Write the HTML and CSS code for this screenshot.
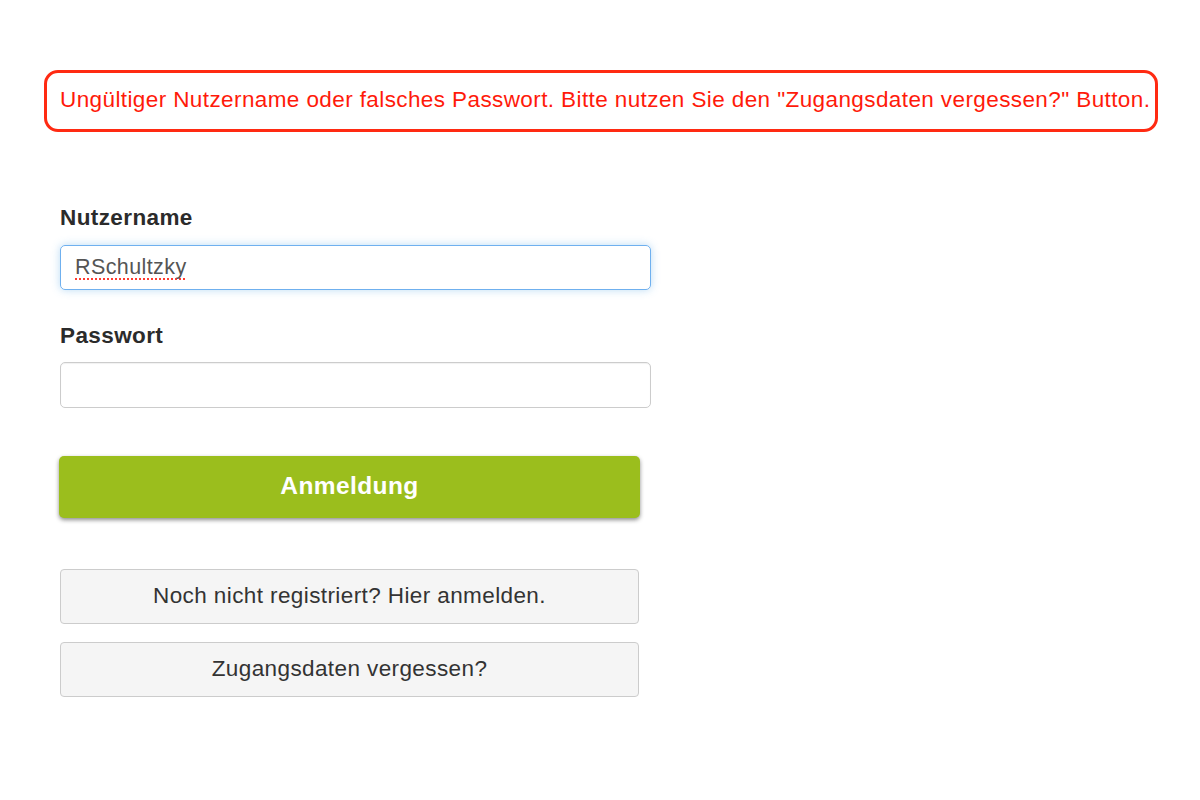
FILE: index.html
```html
<!DOCTYPE html>
<html lang="de">
<head>
<meta charset="utf-8">
<title>Anmeldung</title>
<link rel="stylesheet" href="styles.css">
</head>
<body>
<div class="page">
  <div class="alert">Ungültiger Nutzername oder falsches Passwort. Bitte nutzen Sie den "Zugangsdaten vergessen?" Button.</div>
  <form class="login">
    <label class="label" for="user">Nutzername</label>
    <div class="input focused" id="user"><span class="typed">RSchultzky</span></div>
    <label class="label pw" for="pw">Passwort</label>
    <div class="input" id="pw"></div>
    <button type="button" class="btn-primary">Anmeldung</button>
    <button type="button" class="btn-default first">Noch nicht registriert? Hier anmelden.</button>
    <button type="button" class="btn-default">Zugangsdaten vergessen?</button>
  </form>
</div>
</body>
</html>
```
FILE: styles.css
```css
* { box-sizing: border-box; }
html, body { margin: 0; padding: 0; background: #fff; }
body { font-family: "Liberation Sans", Arial, Helvetica, sans-serif; color: #333; letter-spacing: 0.4px; }
.page { padding: 70px 42px 0 44px; }
.alert {
  height: 62px;
  border: 3px solid #ff2a12;
  border-radius: 14px;
  display: flex;
  align-items: center;
  padding: 0 0 2px 13px;
  color: #ff1a0a;
  font-size: 22.5px;
  white-space: nowrap;
}
.login { display: flex; flex-direction: column; align-items: flex-start; margin: 73px 0 0 16px; width: 591px; }
.label { font-size: 22.5px; font-weight: bold; line-height: 26px; color: #2b2b2b; margin-bottom: 14px; }
.label.pw { margin-top: 33px; margin-bottom: 13px; }
.input {
  width: 591px; height: 46px;
  border: 1px solid #ccc; border-radius: 5px;
  display: flex; align-items: center; padding: 0 14px;
  font-size: 21.5px; color: #555;
  box-shadow: inset 0 1px 1px rgba(0,0,0,0.06);
}
.input.focused {
  height: 45px;
  border: 1.5px solid #6fb0ef;
  box-shadow: 0 0 8px rgba(102,175,233,0.45);
}
.typed {
  text-decoration: underline dotted #ff3b30;
  text-decoration-thickness: 2px;
  text-underline-offset: 4px;
}
.btn-primary {
  margin-top: 48px; margin-left: -1px;
  width: 581px; height: 62px;
  background: #9bbe1d; color: #fff;
  border: none; border-radius: 5px;
  font-family: inherit; font-size: 24.5px; font-weight: bold; letter-spacing: 0.4px;
  box-shadow: 0 2px 4px rgba(0,0,0,0.45);
  padding: 0 0 2px;
}
.btn-default {
  margin-top: 18px;
  width: 579px; height: 55px;
  background: #f5f5f5; color: #333;
  border: 1px solid #ccc; border-radius: 4px;
  font-family: inherit; font-size: 22.5px; letter-spacing: 0.4px;
  padding: 0 0 2px;
}
.btn-default.first { margin-top: 51px; }
```
